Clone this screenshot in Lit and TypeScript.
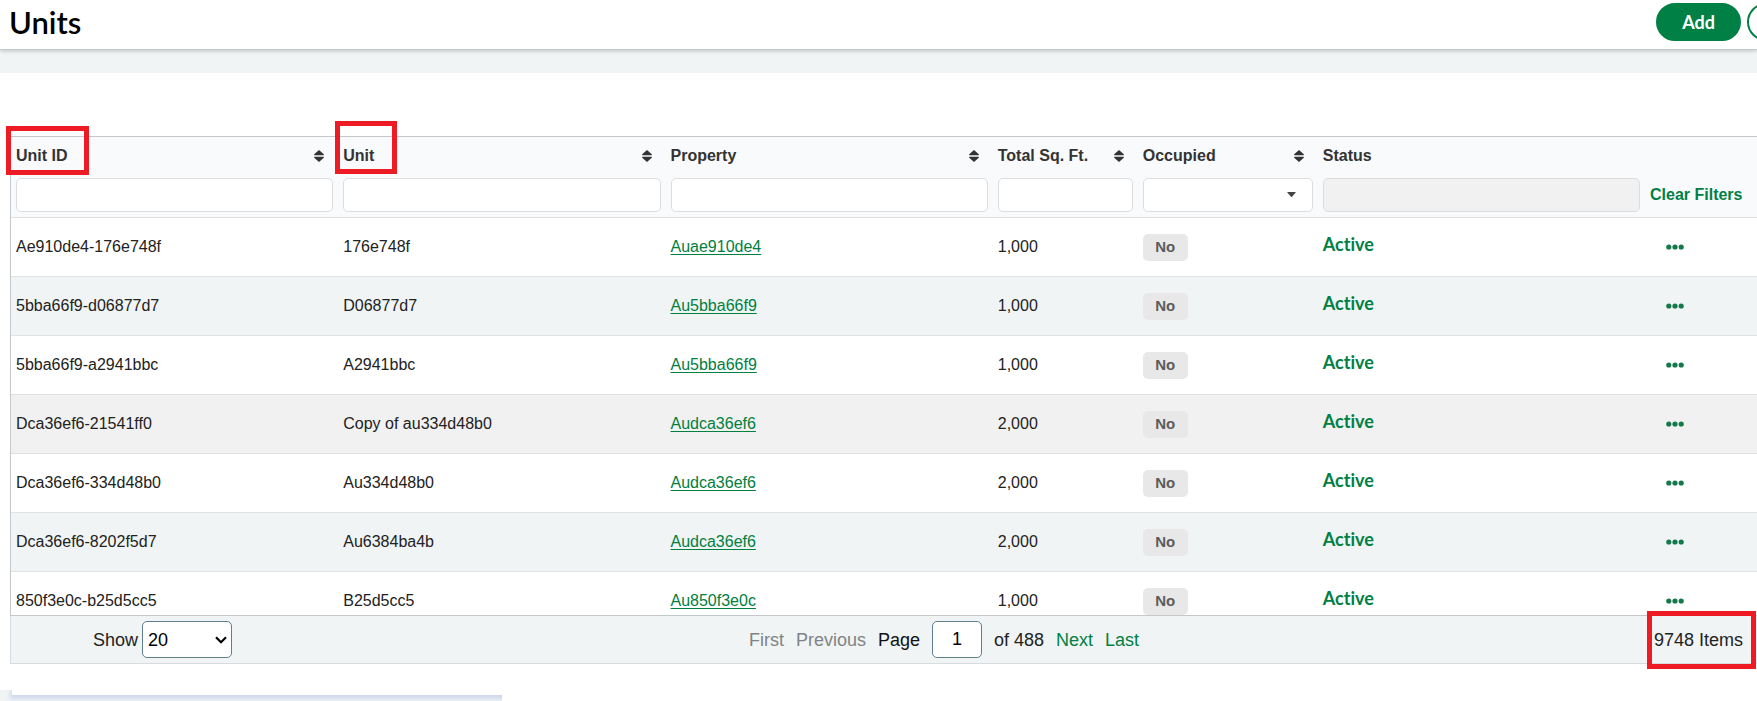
import { LitElement, html, css } from "lit";
import { customElement, state } from "lit/decorators.js";

interface Unit {
  id: string;
  name: string;
  property: string;
  sqft: string;
  highlighted?: boolean;
}

const UNITS: Unit[] = [
  { id: "Ae910de4-176e748f", name: "176e748f", property: "Auae910de4", sqft: "1,000" },
  { id: "5bba66f9-d06877d7", name: "D06877d7", property: "Au5bba66f9", sqft: "1,000" },
  { id: "5bba66f9-a2941bbc", name: "A2941bbc", property: "Au5bba66f9", sqft: "1,000" },
  { id: "Dca36ef6-21541ff0", name: "Copy of au334d48b0", property: "Audca36ef6", sqft: "2,000", highlighted: true },
  { id: "Dca36ef6-334d48b0", name: "Au334d48b0", property: "Audca36ef6", sqft: "2,000" },
  { id: "Dca36ef6-8202f5d7", name: "Au6384ba4b", property: "Audca36ef6", sqft: "2,000" },
  { id: "850f3e0c-b25d5cc5", name: "B25d5cc5", property: "Au850f3e0c", sqft: "1,000" },
];

const COLUMNS = [
  { label: "Unit ID", size: "", sortable: true, filter: "text", marked: true },
  { label: "Unit", size: "", sortable: true, filter: "text", marked: true },
  { label: "Property", size: "", sortable: true, filter: "text", marked: false },
  { label: "Total Sq. Ft.", size: "col-sqft", sortable: true, filter: "text", marked: false },
  { label: "Occupied", size: "col-occupied", sortable: true, filter: "select", marked: false },
  { label: "Status", size: "", sortable: false, filter: "disabled", marked: false },
];

@customElement("units-grid")
class UnitsGrid extends LitElement {
  static styles = css`
    :host {
      display: block;
    }
    * {
      box-sizing: border-box;
    }
    .viewport {
      border-top: 1px solid #c5c8ca;
      border-bottom: 1px solid #c5c8ca;
      border-left: 1px solid #c5c8ca;
    }
    .rows {
      height: 478px;
      clip-path: inset(-20px -10px 0);
    }
    table {
      width: 100%;
      table-layout: fixed;
      border-collapse: separate;
      border-spacing: 0;
      font-size: 16px;
      line-height: 20px;
    }
    .col-sqft {
      width: 145px;
    }
    .col-occupied {
      width: 180px;
    }
    .col-actions {
      width: 112px;
    }
    th {
      padding: 0 5px;
      text-align: left;
      white-space: nowrap;
      background: #f9fafc;
      color: #333;
    }
    .titles th {
      height: 37px;
    }
    .filters th {
      height: 44px;
      padding-bottom: 5px;
      vertical-align: bottom;
      border-bottom: 1px solid #dfe1e3;
    }
    .title {
      display: flex;
      align-items: center;
      justify-content: space-between;
      padding-right: 9px;
    }
    .sort {
      display: flex;
      padding: 0;
      border: 0;
      background: none;
      color: #333;
    }
    .marked {
      position: relative;
    }
    .marker {
      position: absolute;
      border: 5px solid #ed1c24;
      pointer-events: none;
    }
    .marker-0 {
      inset: -20px auto auto -10px;
      width: 83px;
      height: 49px;
    }
    .marker-1 {
      inset: -25px auto auto -8px;
      width: 62px;
      height: 53px;
    }
    .field {
      display: block;
      width: 100%;
      height: 34px;
      padding: 0 8px;
      border: 1px solid #dcdddf;
      border-radius: 5px;
      background: #fff;
      font: inherit;
    }
    .field:disabled {
      background: #f1f1f1;
    }
    .picker {
      position: relative;
    }
    .picker .field {
      appearance: none;
    }
    .caret {
      position: absolute;
      top: 14px;
      right: 17px;
      pointer-events: none;
    }
    .clear {
      display: block;
      height: 34px;
      padding: 0;
      border: 0;
      background: none;
      color: #008044;
      font: inherit;
    }
    td {
      height: 59px;
      padding: 0 5px;
      border-bottom: 1px solid #dfe1e3;
      color: #222;
    }
    tbody tr:nth-child(even) td {
      background: #f0f4f5;
    }
    tbody tr.highlighted:nth-child(n) td {
      background: #f1f1f1;
    }
    .property {
      color: #00803f;
      text-underline-offset: 2px;
    }
    .occupied {
      display: inline-flex;
      align-items: center;
      justify-content: center;
      width: 45px;
      height: 27px;
      border-radius: 5px;
      background: #e8e8e8;
      color: #5b5b5b;
      font-size: 15px;
      font-weight: 700;
      vertical-align: middle;
    }
    .status {
      display: block;
      padding-bottom: 6px;
      color: #008044;
      font: 700 18px/20px Lato, sans-serif;
      font-variant-ligatures: none;
    }
    .more {
      display: flex;
      padding: 0 16px;
      border: 0;
      background: none;
      color: #14784b;
    }
  `;

  @state() private units = UNITS;

  private renderFilter(column: (typeof COLUMNS)[number]) {
    const label = `Filter by ${column.label}`;
    if (column.filter === "select") {
      return html`<div class="picker">
        <select class="field" aria-label=${label}>
          <option></option>
          <option>Yes</option>
          <option>No</option>
        </select>
        <svg class="caret" width="9" height="5" viewBox="0 0 9 5" aria-hidden="true">
          <path d="M.5 0h8q.5.3 0 .8L5 4.7q-.5.4-1 0L.5.8q-.5-.5 0-.8z" fill="#444" />
        </svg>
      </div>`;
    }
    return html`<input class="field" type="text" aria-label=${label} ?disabled=${column.filter === "disabled"} />`;
  }

  render() {
    return html`
      <div class="viewport">
        <div class="rows">
          <table>
            <colgroup>
              ${COLUMNS.map((c) => html`<col class=${c.size} />`)}
              <col class="col-actions" />
            </colgroup>
            <thead>
              <tr class="titles">
                ${COLUMNS.map(
                  (c, i) => html`<th scope="col">
                    <div class="title">
                      <span class="marked">${c.label}${c.marked ? html`<i class="marker marker-${i}"></i>` : ""}</span>
                      ${c.sortable
                        ? html`<button class="sort" aria-label="Sort by ${c.label}">
                            <svg width="10" height="12" viewBox="0 0 10 12" fill="currentColor" aria-hidden="true">
                              <path d="M5 0 9.8 4.2Q10.2 5.3 9.4 5.3H.6Q-.2 5.3 .2 4.2zM5 12 9.8 7.8Q10.2 6.7 9.4 6.7H.6Q-.2 6.7 .2 7.8z" />
                            </svg>
                          </button>`
                        : ""}
                    </div>
                  </th>`
                )}
                <th></th>
              </tr>
              <tr class="filters">
                ${COLUMNS.map((c) => html`<th>${this.renderFilter(c)}</th>`)}
                <th><button class="clear">Clear Filters</button></th>
              </tr>
            </thead>
            <tbody>
              ${this.units.map(
                (u) => html`<tr class=${u.highlighted ? "highlighted" : ""}>
                  <td>${u.id}</td>
                  <td>${u.name}</td>
                  <td><a class="property" href="#">${u.property}</a></td>
                  <td>${u.sqft}</td>
                  <td><span class="occupied">No</span></td>
                  <td><span class="status">Active</span></td>
                  <td>
                    <button class="more" aria-label="Actions for ${u.id}">
                      <svg width="18" height="6" viewBox="0 0 18 6" fill="currentColor" aria-hidden="true">
                        <circle cx="2.8" cy="3" r="2.6" />
                        <circle cx="9" cy="3" r="2.6" />
                        <circle cx="15.2" cy="3" r="2.6" />
                      </svg>
                    </button>
                  </td>
                </tr>`
              )}
            </tbody>
          </table>
        </div>
      </div>
    `;
  }
}

@customElement("units-pager")
class UnitsPager extends LitElement {
  static styles = css`
    :host {
      display: block;
    }
    * {
      box-sizing: border-box;
    }
    .pager {
      display: grid;
      grid-template-columns: 1fr auto 1fr;
      align-items: center;
      height: 48px;
      padding: 0 14px 0 82px;
      border-bottom: 1px solid #d8dcde;
      border-left: 1px solid #d8dcde;
      background: #f0f4f5;
      color: #222;
      font-size: 18px;
      line-height: 22px;
    }
    .size {
      display: flex;
      align-items: center;
      gap: 4px;
    }
    .box {
      height: 37px;
      border: 1px solid #5f7f8e;
      border-radius: 5px;
      background: #fff;
      color: #000;
      font: inherit;
    }
    .size-picker {
      position: relative;
    }
    .size-picker .box {
      width: 90px;
      padding: 0 5px;
      appearance: none;
    }
    .chevron {
      position: absolute;
      top: 15px;
      right: 5px;
      pointer-events: none;
    }
    .pages {
      display: flex;
      align-items: center;
      gap: 12px;
      margin-left: 52px;
    }
    .link {
      padding: 0;
      border: 0;
      background: none;
      color: #008044;
      font: inherit;
    }
    .link:disabled {
      color: #808386;
    }
    .page {
      display: flex;
      align-items: center;
      gap: 12px;
      color: #111;
    }
    .page .box {
      width: 50px;
      padding: 0;
      text-align: center;
    }
    .total {
      position: relative;
      justify-self: end;
    }
    .marker {
      position: absolute;
      inset: -18px -13px auto auto;
      width: 109px;
      height: 58px;
      border: 5px solid #ed1c24;
      pointer-events: none;
    }
  `;

  render() {
    return html`
      <nav class="pager" aria-label="Pagination">
        <div class="size">
          <label for="size">Show</label>
          <div class="size-picker">
            <select class="box" id="size">
              <option>20</option>
              <option>50</option>
              <option>100</option>
            </select>
            <svg class="chevron" width="12" height="8" viewBox="0 0 12 8" fill="none" aria-hidden="true">
              <path d="M1 1.3 6 6.2 11 1.3" stroke="#000" stroke-width="2.2" />
            </svg>
          </div>
        </div>
        <div class="pages">
          <button class="link" disabled>First</button>
          <button class="link" disabled>Previous</button>
          <label class="page">Page <input class="box" type="text" value="1" /></label>
          <span>of 488</span>
          <button class="link">Next</button>
          <button class="link">Last</button>
        </div>
        <span class="total">9748 Items<i class="marker"></i></span>
      </nav>
    `;
  }
}

@customElement("app-root")
class AppRoot extends LitElement {
  static styles = css`
    :host {
      display: flow-root;
      overflow: hidden;
      background: #fff;
      font-family: "Liberation Sans", Arial, sans-serif;
    }
    * {
      box-sizing: border-box;
    }
    .bar {
      position: relative;
      display: flex;
      align-items: flex-start;
      justify-content: space-between;
      height: 50px;
      padding: 3px 0 0 9px;
      border-bottom: 1px solid #c6c9cb;
      background: #fff;
      box-shadow: 0 1px 4px rgb(0 0 0 / 20%);
    }
    h1 {
      margin: 0;
      color: #000;
      font: 600 31px/38px Lato, sans-serif;
    }
    .actions {
      display: flex;
      gap: 6px;
      width: 101px;
    }
    .button {
      flex: none;
      width: 85px;
      height: 38px;
      padding: 0;
      border: 2px solid #008044;
      border-radius: 19px;
      background: #fff;
      color: #008044;
      font: 700 18px/20px Lato, sans-serif;
    }
    .primary {
      background: #008044;
      color: #fff;
    }
    .band {
      height: 23px;
      background: #f0f4f5;
    }
    .content {
      padding: 63px 0 26px 10px;
    }
    .sheet {
      width: 502px;
      height: 11px;
      padding-left: 12px;
      overflow: hidden;
      background: #f0f4f5;
    }
    .sheet-page {
      height: 5px;
      margin-right: -20px;
      background: #fff;
      box-shadow: 0 2px 4px 2px #cfd9ec;
    }
  `;

  render() {
    return html`
      <header class="bar">
        <h1>Units</h1>
        <div class="actions">
          <button class="button primary">Add</button>
          <button class="button" aria-label="More actions"></button>
        </div>
      </header>
      <div class="band"></div>
      <main class="content">
        <units-grid></units-grid>
        <units-pager></units-pager>
      </main>
      <div class="sheet"><div class="sheet-page"></div></div>
    `;
  }
}
